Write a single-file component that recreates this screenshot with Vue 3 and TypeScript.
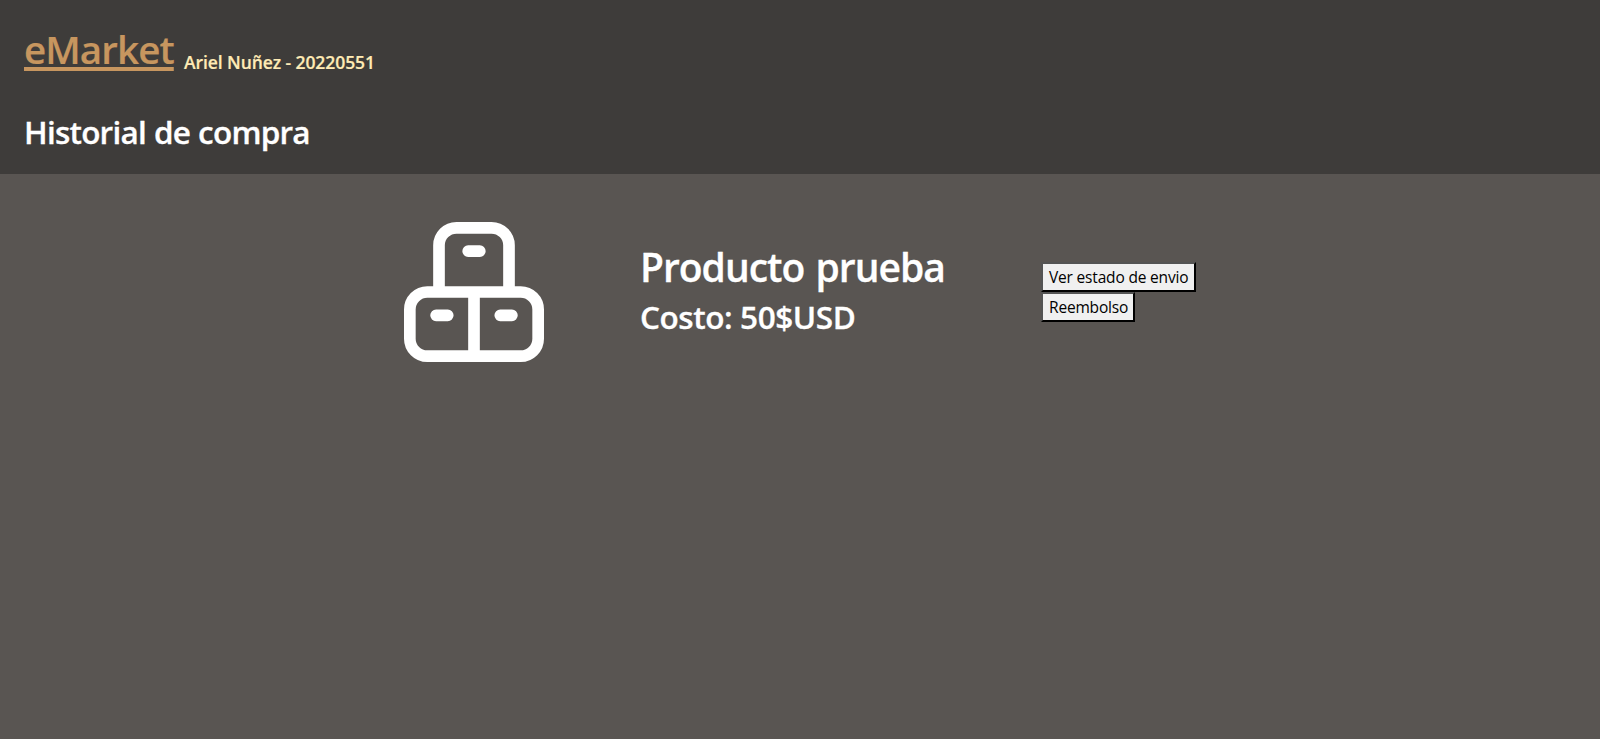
<script setup lang="ts">
import { ref } from 'vue'

interface Purchase {
  id: number
  name: string
  cost: number
}

const purchases = ref<Purchase[]>([{ id: 1, name: 'Producto prueba', cost: 50 }])
</script>

<template>
  <div class="page">
    <header class="header">
      <div class="brand-row">
        <a class="brand" href="#">eMarket</a>
        <span class="author">Ariel Nuñez - 20220551</span>
      </div>
      <h2 class="title">Historial de compra</h2>
    </header>
    <main class="list">
      <article v-for="item in purchases" :key="item.id" class="purchase">
        <svg class="icon" viewBox="0 0 24 24" fill="none" stroke="#fff" stroke-width="2">
          <path d="M6 12V4a3 3 0 0 1 3-3h6a3 3 0 0 1 3 3v8" />
          <rect x="1" y="12" width="22" height="11" rx="3" />
          <path d="M12 12v11" />
          <path d="M11 5h2M5.5 16h2M16.5 16h2" stroke-linecap="round" />
        </svg>
        <div class="info">
          <h1 class="name">{{ item.name }}</h1>
          <h2 class="cost">Costo: {{ item.cost }}$USD</h2>
        </div>
        <div class="actions">
          <button class="status" type="button">Ver estado de envio</button>
          <button class="refund" type="button">Reembolso</button>
        </div>
      </article>
    </main>
  </div>
</template>

<style>
body {
  margin: 0;
  background: #595552;
}
</style>

<style scoped>
.page {
  box-sizing: border-box;
  min-height: 739px;
  background: #595552;
  color: #fff;
  font-family: 'Open Sans', 'Noto Sans', sans-serif;
  font-weight: 600;
  white-space: nowrap;
}
.header {
  box-sizing: border-box;
  height: 174px;
  padding: 26px 24px 0;
  background: #3e3c3a;
}
.brand-row {
  display: flex;
  align-items: flex-start;
  gap: 10px;
  height: 82px;
}
.brand {
  width: 150px;
  margin-top: -1px;
  color: #c7965f;
  font-size: 38.5px;
  line-height: 48px;
  letter-spacing: -0.9px;
  text-decoration-line: underline;
  text-decoration-thickness: 4px;
  text-underline-offset: 3px;
  text-decoration-skip-ink: none;
  -webkit-text-stroke: 0.2px currentColor;
}
.author {
  margin-top: 25px;
  color: #ffebb5;
  font-size: 17.5px;
  line-height: 22px;
  letter-spacing: -0.08px;
  -webkit-text-stroke: 0.2px currentColor;
}
.title,
.name,
.cost {
  margin: 0;
  font-weight: 600;
  -webkit-text-stroke: 0.3px currentColor;
}
.title {
  font-size: 31.5px;
  line-height: 48px;
  letter-spacing: -0.78px;
  word-spacing: 0.6px;
}
.list {
  padding: 48px 404px;
}
.purchase {
  display: flex;
  align-items: flex-start;
}
.icon {
  width: 140px;
  height: 140px;
}
.info {
  width: 401px;
  margin: 20px 0 0 96px;
}
.name {
  font-size: 39px;
  line-height: 50px;
  letter-spacing: -1px;
  word-spacing: 2.2px;
}
.cost {
  font-size: 31.5px;
  line-height: 50px;
  letter-spacing: -0.42px;
}
.actions {
  display: flex;
  flex-direction: column;
  align-items: flex-start;
  margin-top: 40px;
}
.actions button {
  box-sizing: border-box;
  height: 30px;
  padding: 0 6px;
  border: 2px outset #000;
  border-radius: 0;
  background: #f0f0f0;
  color: #000;
  font-family: 'Open Sans', 'Noto Sans', sans-serif;
  font-size: 15.5px;
  font-weight: 400;
  line-height: 24px;
  letter-spacing: -0.18px;
  white-space: nowrap;
}
.actions .status {
  width: 155px;
}
.actions .refund {
  width: 94px;
}
</style>
